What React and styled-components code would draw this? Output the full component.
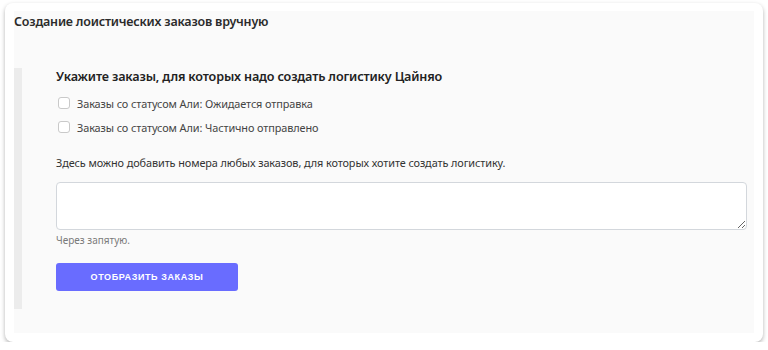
import styled, { createGlobalStyle } from 'styled-components'

// Styles
const GlobalStyle=createGlobalStyle`
    body{
        margin: 0;
        background: #fff;
        font-family: "Noto Sans", "Open Sans", sans-serif;
    }
`
const Card=styled.div`
    box-sizing: border-box;
    margin: 3px 5px 0 5px;
    width: 758px;
    height: 339px;
    padding: 8px 9px 9px 9px;
    background: #fff;
    border-radius: 8px;
    box-shadow: 0 2px 4px rgba(0,0,0,0.3);
`
const Panel=styled.div`
    box-sizing: border-box;
    height: 100%;
    background: #fafafa;
`
const Title=styled.h2`
    margin: 0 0 35px 0;
    font-size: 12.5px;
    line-height: 22px;
    font-weight: 600;
    color: #2b2b2b;
    letter-spacing: -0.2px;
`
const Section=styled.section`
    display: flex;
`
const Bar=styled.div`
    width: 8px;
    background: #ececec;
    flex-shrink: 0;
`
const Content=styled.div`
    flex: 1;
    display: flex;
    flex-direction: column;
    padding: 0 7px 18px 34px;
`
const Heading=styled.h3`
    margin: 0 0 5px 0;
    font-size: 12.6px;
    line-height: 18px;
    font-weight: 600;
    color: #222;
    letter-spacing: -0.15px;
`
const CheckRow=styled.label`
    display: flex;
    align-items: center;
    gap: 7px;
    height: 24px;
    padding-left: 2px;
    font-size: 10.9px;
    color: #444;
    letter-spacing: -0.1px;
`
const Box=styled.span`
    box-sizing: border-box;
    width: 12px;
    height: 12px;
    border: 1px solid #c9c9c9;
    border-radius: 3px;
    background: #fff;
`
const Description=styled.p`
    margin: 15px 0 10px 0;
    font-size: 10.9px;
    line-height: 18px;
    color: #333;
    letter-spacing: -0.1px;
`
const TextArea=styled.textarea`
    box-sizing: border-box;
    width: 100%;
    height: 48px;
    margin: 0;
    border: 1px solid #d3d7dc;
    border-radius: 4px;
    background: #fff;
    resize: vertical;
    display: block;
`
const Help=styled.small`
    display: block;
    margin: 2px 0 15px 0;
    font-size: 10px;
    line-height: 16px;
    color: #7a7a7a;
`
const Button=styled.button`
    width: 182px;
    height: 28px;
    border: none;
    border-radius: 3px;
    background: #696cff;
    color: #fff;
    font-family: "Liberation Sans", Arial, sans-serif;
    font-size: 9px;
    font-weight: 700;
    letter-spacing: 0.6px;
    text-transform: uppercase;
    cursor: pointer;
`

// Components
const App=()=>{
    const statuses=[
        'Заказы со статусом Али: Ожидается отправка',
        'Заказы со статусом Али: Частично отправлено',
    ]

    return(
        <>
            <GlobalStyle />
            <Card>
                <Panel>
                    <Title>Создание лоистических заказов вручную</Title>
                    <Section>
                        <Bar />
                        <Content>
                            <Heading>Укажите заказы, для которых надо создать логистику Цайняо</Heading>
                            {statuses.map(s=>(
                                <CheckRow key={s}>
                                    <Box />
                                    {s}
                                </CheckRow>
                            ))}
                            <Description>Здесь можно добавить номера любых заказов, для которых хотите создать логистику.</Description>
                            <TextArea />
                            <Help>Через запятую.</Help>
                            <div>
                                <Button>Отобразить заказы</Button>
                            </div>
                        </Content>
                    </Section>
                </Panel>
            </Card>
        </>
    )
}

export default App;
